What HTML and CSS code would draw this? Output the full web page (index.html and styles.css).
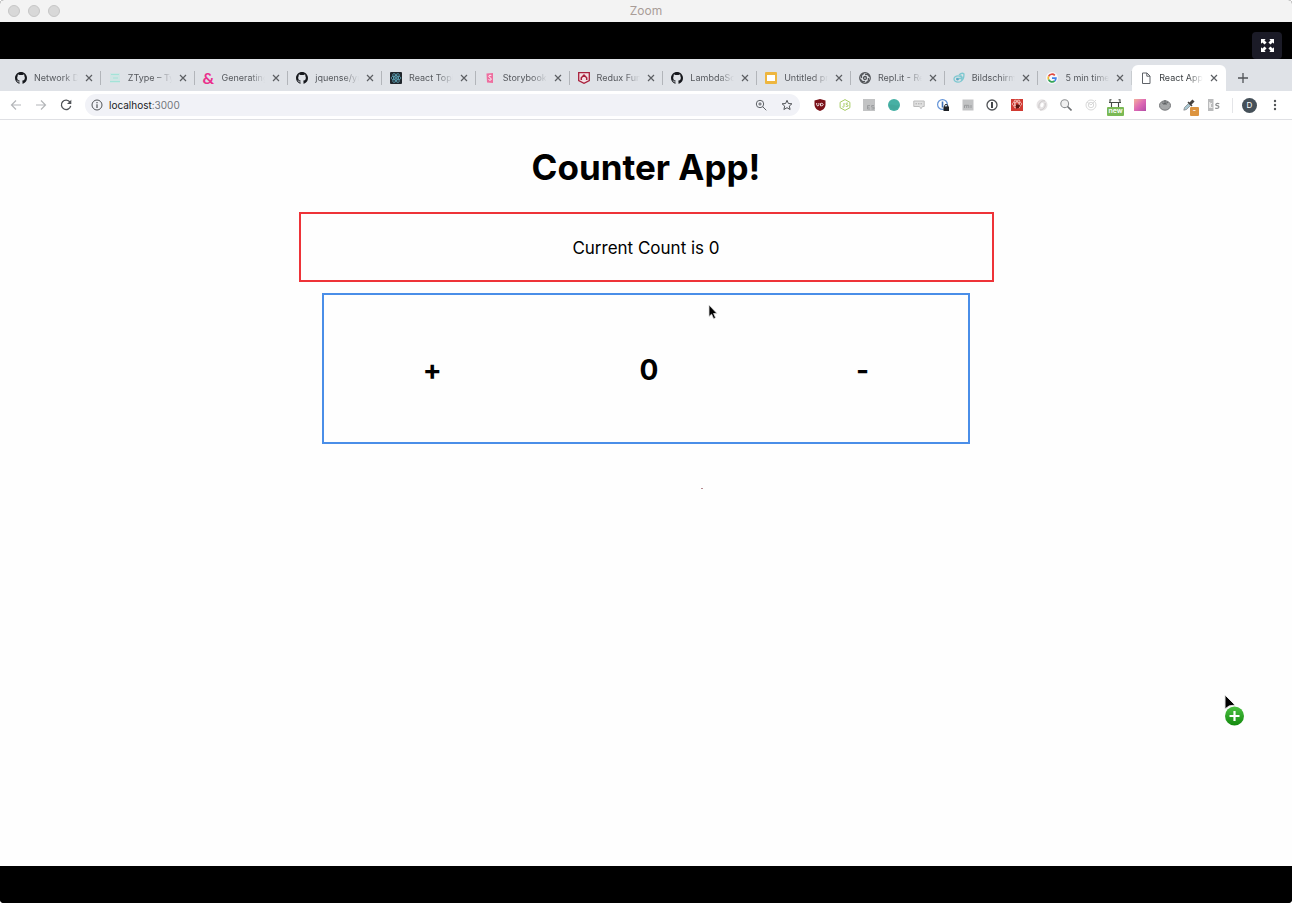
FILE: index.html
```html
<!DOCTYPE html>
<html lang="en">
<head>
<meta charset="utf-8">
<title>Zoom</title>
<link rel="stylesheet" href="styles.css">
</head>
<body>
<svg class="defs" aria-hidden="true">
  <symbol id="github" viewBox="0 0 16 16"><path fill="#16181d" d="M8 0C3.58 0 0 3.58 0 8c0 3.54 2.29 6.53 5.47 7.59.4.07.55-.17.55-.38 0-.19-.01-.82-.01-1.49-2.01.37-2.53-.49-2.69-.94-.09-.23-.48-.94-.82-1.13-.28-.15-.68-.52-.01-.53.63-.01 1.08.58 1.23.82.72 1.21 1.87.87 2.33.66.07-.52.28-.87.51-1.07-1.78-.2-3.64-.89-3.64-3.95 0-.87.31-1.59.82-2.15-.08-.2-.36-1.02.08-2.12 0 0 .67-.21 2.2.82a7.6 7.6 0 0 1 4 0c1.53-1.04 2.2-.82 2.2-.82.44 1.1.16 1.92.08 2.12.51.56.82 1.27.82 2.15 0 3.07-1.87 3.75-3.65 3.95.29.25.54.73.54 1.48 0 1.07-.01 1.93-.01 2.2 0 .21.15.46.55.38A8 8 0 0 0 16 8c0-4.42-3.58-8-8-8z"/></symbol>
  <symbol id="x" viewBox="0 0 8 8"><path d="M1 1l6 6M7 1L1 7" stroke="#5c5f63" stroke-width="1.2" fill="none"/></symbol>
</svg>

<header class="titlebar">
  <div class="lights"><i></i><i></i><i></i></div>
  <span class="window-title">Zoom</span>
</header>

<div class="letterbox">
  <button class="expand" aria-label="Exit full screen">
    <svg viewBox="0 0 14 14"><g fill="#fff"><path d="M0 0h5L3.700 1.500 6 3.800 3.800 6 1.500 3.700 0 5zM14 0v5l-1.500-1.300L10.200 6 8 3.800l2.300-2.300L9 0zM0 14V9l1.500 1.300L3.800 8 6 10.200l-2.300 2.300L5 14zM14 14H9l1.300-1.500L8 10.200 10.200 8l2.300 2.300L14 9z"/></g></svg>
  </button>
</div>

<nav class="tabstrip" aria-label="Tabs">
  <div class="tab"><svg class="fav"><use href="#github"/></svg><a href="#">Network D</a><button aria-label="Close tab"><svg><use href="#x"/></svg></button></div>
  <div class="tab"><svg class="fav" viewBox="0 0 12 12"><path fill="#cfe5e4" d="M1 1h10v10H1z"/><path stroke="#a3e3d8" d="M2 2.500h8M4 6h5M1 9.500h10"/></svg><a href="#">ZType – Typing</a><button aria-label="Close tab"><svg><use href="#x"/></svg></button></div>
  <div class="tab"><span class="fav amp">&amp;</span><a href="#">Generating</a><button aria-label="Close tab"><svg><use href="#x"/></svg></button></div>
  <div class="tab"><svg class="fav"><use href="#github"/></svg><a href="#">jquense/yup</a><button aria-label="Close tab"><svg><use href="#x"/></svg></button></div>
  <div class="tab"><svg class="fav" viewBox="0 0 12 12"><rect width="12" height="12" rx="1" fill="#20262c"/><g fill="none" stroke="#5fa5b8" stroke-width=".8"><ellipse cx="6" cy="6" rx="5" ry="2"/><ellipse cx="6" cy="6" rx="5" ry="2" transform="rotate(60 6 6)"/><ellipse cx="6" cy="6" rx="5" ry="2" transform="rotate(120 6 6)"/></g><circle cx="6" cy="6" r="1" fill="#5fa5b8"/></svg><a href="#">React Topics</a><button aria-label="Close tab"><svg><use href="#x"/></svg></button></div>
  <div class="tab"><svg class="fav" viewBox="0 0 12 12"><path fill="#ee6e9f" d="M2.500 1.500L9 1v10l-6-.4z"/><path d="M7.400 4C7 2.800 4.800 3 4.900 4.400 5 6 7.300 5.500 7.200 7.200 7.100 8.700 4.900 8.500 4.700 7.400" fill="none" stroke="#fff"/></svg><a href="#">Storybook</a><button aria-label="Close tab"><svg><use href="#x"/></svg></button></div>
  <div class="tab"><svg class="fav" viewBox="0 0 12 12"><path fill="#f3dfe4" stroke="#a8203c" stroke-width="1.300" d="M.7.7h10.600v7.800L6 11.300.7 8.500z"/><path fill="none" stroke="#a8203c" stroke-width="1.500" d="M3.300 8V5.800L6 3l2.700 2.800V8"/></svg><a href="#">Redux Fund</a><button aria-label="Close tab"><svg><use href="#x"/></svg></button></div>
  <div class="tab"><svg class="fav"><use href="#github"/></svg><a href="#">LambdaSchool</a><button aria-label="Close tab"><svg><use href="#x"/></svg></button></div>
  <div class="tab"><svg class="fav" viewBox="0 0 12 12"><rect width="12" height="12" rx="1" fill="#eeb63f"/><path fill="#fff" d="M2 3h8v6H2z"/></svg><a href="#">Untitled pres</a><button aria-label="Close tab"><svg><use href="#x"/></svg></button></div>
  <div class="tab"><svg class="fav" viewBox="0 0 12 12"><circle cx="6" cy="6" r="5.300" fill="none" stroke="#505357" stroke-width="1.200"/><g fill="none" stroke="#505357" stroke-width="1.300"><circle cx="6" cy="6" r="1.500"/><path d="M6 2.500c3-.8 4.300 1 4.400 2.500M9.300 6c.8 3-1 4.300-2.500 4.400M6 9.400c-3 .8-4.300-1-4.400-2.500M2.600 6c-.8-3 1-4.300 2.500-4.400"/></g></svg><a href="#">Repl.it - React</a><button aria-label="Close tab"><svg><use href="#x"/></svg></button></div>
  <div class="tab"><svg class="fav" viewBox="0 0 12 12"><g fill="none" stroke="#7ec8d0" stroke-width="1.300"><ellipse cx="5" cy="7" rx="4" ry="3.200"/><path d="M3 6.500h5.500c1-1 .5-3-1.500-2.500M6 3c2-2 4-2 5-1 0 2-.5 6-3 7"/></g><circle cx="4.500" cy="7.300" r="1.200" fill="#5ba9c6"/></svg><a href="#">Bildschirm</a><button aria-label="Close tab"><svg><use href="#x"/></svg></button></div>
  <div class="tab last-idle"><svg class="fav" viewBox="0 0 12 12"><circle cx="6" cy="6" r="6" fill="#f7f8fa"/><g fill="none" stroke-width="1.700"><path stroke="#e04a3f" d="M2.600 4.300A3.900 3.900 0 0 1 8.800 3.300"/><path stroke="#f1b92e" d="M2.600 7.700a3.900 3.900 0 0 1 0-3.400"/><path stroke="#35a457" d="M2.600 7.700a3.900 3.900 0 0 0 6 1.300"/><path stroke="#4382ea" d="M8.600 9c1-.9 1.300-1.800 1.300-2.800H6"/></g></svg><a href="#">5 min timer</a><button aria-label="Close tab"><svg><use href="#x"/></svg></button></div>
  <div class="tab active"><svg class="fav" viewBox="0 0 12 12"><path fill="#fff" stroke="#5f6368" d="M2.500 1h4.500l3 3v7.500H2.500zM6.800 1v3.200H10"/></svg><a href="#" aria-current="page">React App</a><button aria-label="Close tab"><svg><use href="#x"/></svg></button></div>
  <div class="strip-end"><button aria-label="New tab"><svg viewBox="0 0 10 10"><path d="M5 0v10M0 5h10" stroke="#505357" stroke-width="1.300"/></svg></button></div>
</nav>

<div class="toolbar">
  <div class="nav-buttons">
    <button aria-label="Back"><svg viewBox="0 0 12 12"><path d="M11 6H1.500M6 1.500L1.500 6 6 10.500" fill="none" stroke="#b4b6b9" stroke-width="1.200"/></svg></button>
    <button aria-label="Forward"><svg viewBox="0 0 12 12"><path d="M1 6h9.500M6 1.500L10.500 6 6 10.500" fill="none" stroke="#b4b6b9" stroke-width="1.200"/></svg></button>
    <button aria-label="Reload"><svg viewBox="0 0 12 12"><path d="M10 3.200A4.700 4.700 0 1 0 10.700 6.800" fill="none" stroke="#505357" stroke-width="1.300"/><path fill="#505357" d="M11.300.8v4.300H7z"/></svg></button>
  </div>
  <div class="omnibox">
    <svg viewBox="0 0 12 12"><circle cx="6" cy="6" r="5" fill="none" stroke="#505357"/><path d="M6 5.300V9M6 3v1.200" stroke="#505357" stroke-width="1.200"/></svg>
    <div class="url"><span>localhost</span>:3000</div>
    <button aria-label="Zoom"><svg viewBox="0 0 12 12"><g fill="none" stroke="#5f6368"><circle cx="5" cy="5" r="3.700"/><path d="M7.700 7.700l3.600 3.600M3.300 5h3.400M5 3.300v3.400"/></g></svg></button>
    <button aria-label="Bookmark"><svg viewBox="0 0 12 12"><path d="M6 1.300l1.400 3.200 3.500.3-2.600 2.300.8 3.400L6 8.700l-3.100 1.800.8-3.400L1.100 4.800l3.500-.3z" fill="none" stroke="#505357"/></svg></button>
  </div>
  <div class="extensions">
    <button aria-label="uBlock"><svg viewBox="0 0 12 12"><path fill="#7a1119" d="M6 0l5.500 1.500v4C11.500 9 9 11 6 12 3 11 .5 9 .5 5.500v-4z"/><path d="M2.700 4v1.700c0 1.500 2.200 1.500 2.200 0V4M6.500 4.500v2.300h.8c2.500 0 2.500-2.500 0-2.500z" fill="none" stroke="#fff" stroke-width=".9"/></svg></button>
    <button aria-label="Node"><svg viewBox="0 0 12 12"><path d="M6 .6l4.900 2.700v5.400L6 11.400 1.100 8.700V3.300z" fill="none" stroke="#a6cb63"/><path d="M5 4v3.500c0 1-1.500 1-1.500.2M9 4.300c-2.400-.8-2.700 1.200-1 1.500 1.800.3 1.300 2.300-1.200 1.500" fill="none" stroke="#a6cb63"/></svg></button>
    <button aria-label="ES"><svg viewBox="0 0 12 12"><path fill="#c2c3c4" d="M0 0h12v12H0z"/><path d="M7 6.500H4.500V10H7M4.500 8.200h2M11 6.500H8.700v1.700H11V10H8.500" fill="none" stroke="#999b9d" stroke-width=".9"/></svg></button>
    <button aria-label="Grammar"><svg viewBox="0 0 12 12"><circle cx="6" cy="6" r="6" fill="#46b0a4"/><path fill="#3b9d91" d="M1 6c4-2 7 2 10 0a5 5 0 0 1-10 0z" opacity=".4"/></svg></button>
    <button aria-label="Chat"><svg viewBox="0 0 12 12"><path fill="#e1e1e1" stroke="#bbb" d="M.8 2h10.400v5.500H9.500L8 9.700 6.500 7.500H.8z"/><path d="M2.500 4.800h7" stroke="#aaa" stroke-dasharray="1.500 1"/></svg></button>
    <button aria-label="Password manager"><svg viewBox="0 0 12 12"><circle cx="5.500" cy="5.500" r="4.900" fill="#fff" stroke="#6595d8" stroke-width="1.200"/><path d="M5.500 2.500v6" stroke="#3d71ba" stroke-width="1.600"/><path fill="#1e2227" d="M6.500 7.500h5.500V12H6.500z"/><path d="M7.700 8V6.600c0-1.600 3-1.600 3 0V8" fill="none" stroke="#1e2227"/></svg></button>
    <button aria-label="Mi"><svg viewBox="0 0 12 12"><path fill="#c2c3c4" d="M.5.5h11v11H.5z"/><path d="M2.500 9V6.300h4.300V9M4.700 6.500V9M9 6v3" fill="none" stroke="#999b9d"/></svg></button>
    <button aria-label="1Password"><svg viewBox="0 0 12 12"><circle cx="6" cy="6" r="5" fill="#fff" stroke="#505357" stroke-width="1.300"/><path d="M6 3v6" stroke="#303338" stroke-width="1.800"/></svg></button>
    <button aria-label="React dev tools"><svg viewBox="0 0 12 12"><path fill="#d13a32" d="M0 0h12v12H0z"/><g fill="none" stroke="#f4c2bb" stroke-width=".8"><ellipse cx="6" cy="5" rx="5" ry="2"/><ellipse cx="6" cy="5" rx="4.500" ry="2" transform="rotate(60 6 5)"/><ellipse cx="6" cy="5" rx="4.500" ry="2" transform="rotate(120 6 5)"/></g><path fill="#591611" d="M5 5.500h3l1.500 1.500L8 8v1.500L7 9l-1.500 1-.7-2.500z"/></svg></button>
    <button aria-label="Disc"><svg viewBox="0 0 12 12"><ellipse cx="6" cy="6" rx="5.500" ry="5.700" fill="#e6e3e4"/><path d="M3 9C2 4 6 1 9 2M4 11c4 0 6-4 5-7" fill="none" stroke="#cbc8c9"/><ellipse cx="6" cy="6" rx="1.500" ry="2.300" fill="#fff" transform="rotate(25 6 6)"/></svg></button>
    <button aria-label="Search"><svg viewBox="0 0 12 12"><circle cx="4.700" cy="4.700" r="3.900" fill="#f1f1f1" stroke="#8f9193" stroke-width="1.100"/><path d="M7.500 7.500l4 4" stroke="#6e7073" stroke-width="1.600"/></svg></button>
    <button aria-label="Target"><svg viewBox="0 0 12 12"><g fill="none" stroke="#d9d9d9"><circle cx="6" cy="6" r="5"/><circle cx="6" cy="6" r="2.700"/><path d="M6 6l5-5M2 3l4 3"/></g></svg></button>
    <button aria-label="Capture"><svg viewBox="0 0 12 12"><path d="M1 3V.8h1.500M11 3V.8H9.500M2.500 8V3.500h7V8M0 3.500h12" fill="none" stroke="#454a45" stroke-width="1.100"/></svg><span class="badge">new</span></button>
    <button aria-label="Gradient"><svg viewBox="0 0 12 12"><defs><linearGradient id="pink" x1="0" y1="0" x2="1" y2="1"><stop stop-color="#f4b19a"/><stop offset=".5" stop-color="#de69b4"/><stop offset="1" stop-color="#b34ba6"/></linearGradient></defs><path fill="url(#pink)" d="M0 0h12v12H0z"/></svg></button>
    <button aria-label="Tomato"><svg viewBox="0 0 12 12"><ellipse cx="6" cy="6.500" rx="5.500" ry="4.700" fill="#a5a7a8" stroke="#747678"/><path d="M3 4l3 .5L9 3.500M6 4.500L4.500 6M6 4.500L7.500 6M6 4.500V1" fill="none" stroke="#5f6264"/></svg></button>
    <button aria-label="Color picker"><svg viewBox="0 0 12 12"><path d="M.8 11.200l.7-2.700L5.500 4.500l2 2-4 4z" fill="#a9c7d2" stroke="#7f8081" stroke-width=".7"/><path d="M5 3l4 4" stroke="#44413f" stroke-width="1.500"/><path d="M7 5l3.500-3.500" stroke="#44413f" stroke-width="3"/></svg><span class="badge swatch">-</span></button>
    <button aria-label="CSS"><svg viewBox="0 0 12 12"><path fill="#babbbc" d="M0 0h5.500v12H0z"/><path d="M1.700 3v6M4 4.500H2.500v4H4.500" fill="none" stroke="#eee"/><path d="M11.300 4.700C8 3.600 6.500 6.400 9.200 6.700c3 .4 1.700 3.600-2 2.400" fill="none" stroke="#909294" stroke-width="1.200"/></svg></button>
  </div>
  <div class="profile">
    <button class="avatar" aria-label="Profile">D</button>
    <button aria-label="Menu"><svg viewBox="0 0 12 12"><g fill="#505357"><circle cx="6" cy="2" r="1.200"/><circle cx="6" cy="6" r="1.200"/><circle cx="6" cy="10" r="1.200"/></g></svg></button>
  </div>
</div>

<main class="page">
  <h1>Counter App!</h1>
  <p class="display">Current Count is 0</p>
  <section class="counter">
    <button>+</button>
    <output>0</output>
    <button>-</button>
  </section>
  <i class="speck"></i>
  <svg class="pointer inner" viewBox="0 0 10 16"><path d="M1 1v11.500l2.600-2.300 2 4.500 2-.9-2-4.300H9z" stroke="#ddd" stroke-width=".8"/></svg>
  <svg class="pointer drag" viewBox="0 0 24 34"><defs><linearGradient id="green" x2="0" y2="1"><stop stop-color="#4cc142"/><stop offset="1" stop-color="#12890d"/></linearGradient></defs><path d="M3 2v14l4-3 6-1z" stroke="#e4e4e4"/><circle cx="12.500" cy="23" r="9.500" fill="url(#green)"/><path d="M12.500 18v10M7.500 23h10" stroke="#fff" stroke-width="2.200"/></svg>
</main>
<footer class="letterbox"></footer>
</body>
</html>
```

FILE: styles.css
```css
* { box-sizing: border-box; }
html { background: #fff; }
body {
  margin: 0;
  min-height: 100vh;
  display: flex;
  flex-direction: column;
  font-family: Inter, "Liberation Sans", sans-serif;
  background: #000;
  border-radius: 4px;
  overflow: hidden;
}
button {
  margin: 0;
  padding: 0;
  border: 0;
  background: none;
  font: inherit;
  color: inherit;
  display: flex;
  align-items: center;
  justify-content: center;
}
svg { display: block; flex: none; width: 12px; height: 12px; }
.defs { position: absolute; width: 0; height: 0; }

.titlebar {
  display: grid;
  grid-template-columns: 1fr auto 1fr;
  align-items: center;
  height: 22px;
  padding: 0 8px;
  background: #f3f3f3;
}
.lights { display: flex; gap: 8px; }
.lights i {
  width: 12px;
  height: 12px;
  border: 1px solid #c6c6c6;
  border-radius: 50%;
  background: #d8d8d8;
}
.window-title { font-size: 12px; line-height: 22px; color: #a99d98; }

.letterbox {
  display: flex;
  justify-content: flex-end;
  align-items: flex-end;
  height: 37px;
  padding-right: 10px;
  background: #000;
}
.expand {
  width: 30px;
  height: 27px;
  border-radius: 4px;
  background: #1b1b27;
}
.expand svg { width: 13px; height: 13px; }

.tabstrip {
  display: flex;
  height: 32px;
  padding-left: 7px;
  background: #dfe2e7;
}
.tab {
  flex: 1 1 0;
  min-width: 0;
  display: flex;
  align-items: center;
  height: 26px;
  margin-top: 6px;
  padding: 0 6px 0 8px;
  position: relative;
}
.tab::after {
  content: "";
  position: absolute;
  right: 0;
  top: 6px;
  width: 1px;
  height: 14px;
  background: #b2b5ba;
}
.tab.last-idle::after { opacity: .5; }
.tab.active::after { display: none; }
.tab.active { background: #fff; border-radius: 6px 6px 0 0; }
.fav { width: 12px; height: 12px; }
.amp {
  flex: none;
  font: 700 16px/12px Lato, sans-serif;
  color: #ea2f8c;
}
.tab a {
  flex: 1;
  min-width: 0;
  margin-left: 7px;
  overflow: hidden;
  white-space: nowrap;
  font-size: 9px;
  line-height: 14px;
  color: #55585d;
  text-decoration: none;
  -webkit-mask-image: linear-gradient(to right, #000 65%, transparent);
  mask-image: linear-gradient(to right, #000 65%, transparent);
}
.tab.active a { color: #3c4043; }
.tab button { width: 12px; height: 12px; margin-left: 5px; }
.tab button svg { width: 8px; height: 8px; }
.strip-end { width: 66px; padding: 0 0 0 10px; margin-top: 6px; }
.strip-end button { width: 14px; height: 26px; }
.strip-end svg { width: 10px; height: 10px; }

.toolbar {
  display: flex;
  align-items: center;
  height: 29px;
  background: #fff;
  border-bottom: 1px solid #dfe0e4;
}
.nav-buttons { display: flex; gap: 13px; padding: 0 13px 0 10px; }
.omnibox {
  flex: 1;
  display: flex;
  align-items: center;
  height: 22px;
  padding: 0 7px 0 6px;
  border-radius: 11px;
  background: #f1f2f7;
}
.url { flex: 1; margin-left: 6px; font-size: 10px; color: #73767b; }
.url span { color: #202124; }
.omnibox button { margin-left: 14px; }
.extensions {
  display: grid;
  grid-template-columns: repeat(17, 1fr);
  width: 418px;
  margin-left: 8px;
}
.extensions button { position: relative; }
.badge {
  position: absolute;
  left: 4px;
  top: 8px;
  width: 17px;
  height: 9px;
  border-radius: 1px;
  background: #7ab955;
  color: #fff;
  font-size: 7px;
  line-height: 8px;
  font-weight: 600;
  text-align: center;
}
.swatch { left: 13px; width: 9px; background: #dc9440; }
.profile {
  display: flex;
  align-items: center;
  gap: 12px;
  margin-left: 6px;
  padding: 0 11px 0 9px;
  border-left: 1px solid #e4e5e8;
}
.avatar {
  width: 15px;
  height: 15px;
  border-radius: 50%;
  background: #455059;
  color: #fff;
  font-size: 8px;
}

.page {
  flex: 1;
  display: flex;
  flex-direction: column;
  align-items: center;
  position: relative;
  background: #fefefe;
  color: #000;
}
h1 { margin: 24px 0 22px; font-size: 35px; line-height: 46px; font-weight: 700; }
.display {
  width: 54%;
  max-width: 695px;
  margin: 0 0 11px;
  padding: 23px 22px 21px;
  border: 2px solid #ee3338;
  font-size: 17px;
  line-height: 22px;
  text-align: center;
}
.counter {
  width: 50%;
  min-width: 648px;
  display: flex;
  justify-content: space-around;
  align-items: center;
  padding: 58px 0 54px;
  border: 2px solid #4a8ee8;
  font-size: 28px;
  line-height: 35px;
  font-weight: 700;
}
.speck {
  position: absolute;
  left: 701px;
  top: 368px;
  width: 2px;
  height: 1px;
  background: #b58a90;
}
.pointer { position: absolute; }
.inner { left: 708px; top: 184px; width: 10px; height: 16px; }
.drag { right: 46px; bottom: 139px; width: 24px; height: 34px; }
```
